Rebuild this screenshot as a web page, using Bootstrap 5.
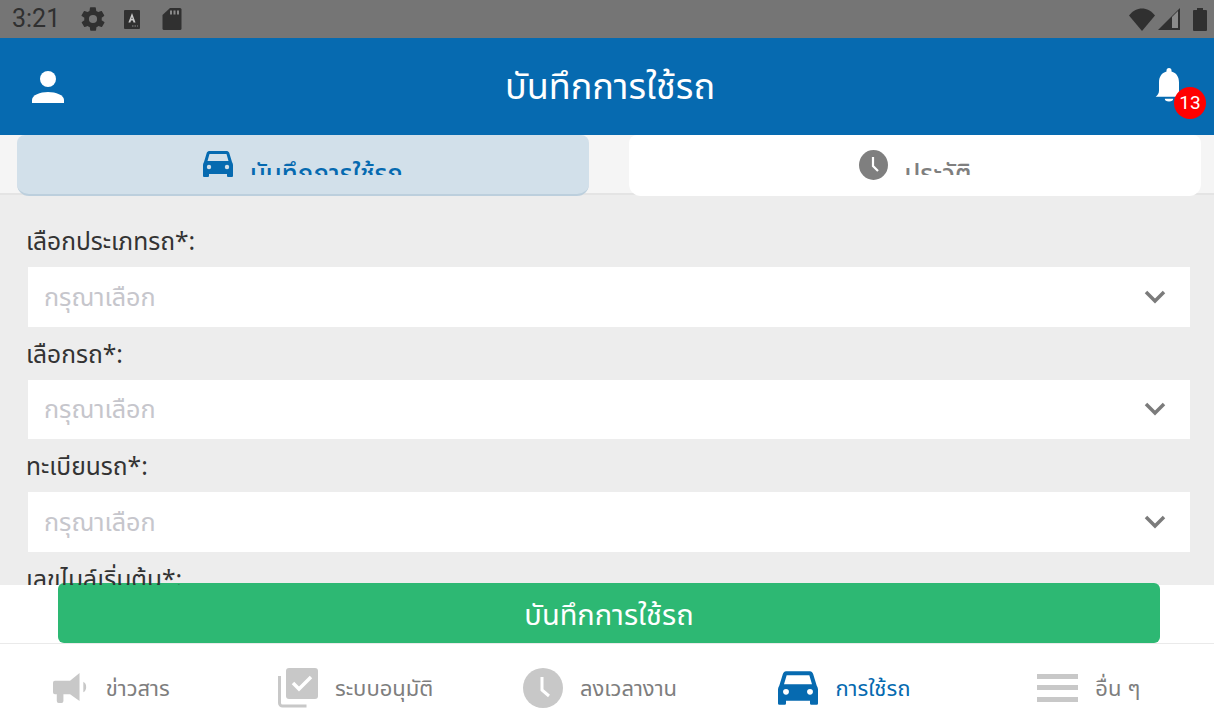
<!DOCTYPE html>
<html lang="th">
<head>
<meta charset="utf-8">
<title>บันทึกการใช้รถ</title>
<link href="https://cdn.jsdelivr.net/npm/bootstrap@5.3.0/dist/css/bootstrap.min.css" rel="stylesheet">
<style>
html,body{height:726px;overflow:hidden}
body{font-family:"Noto Sans","Noto Sans Thai","Open Sans","DejaVu Sans",sans-serif;background:#fff;width:1214px}
.sbar{height:38px;background:#757575;color:#303030;padding:0 7px 0 12px}
.sbar .clock{font-family:Roboto,sans-serif;font-size:25px;line-height:34px;width:47px}
.ic-gear{margin-left:20px}
.ic-font{margin-left:16px}
.ic-sd{margin-left:21px}
.sright{gap:3px}
.ic-batt{margin-left:10px}
.hdr{height:97px;background:#066ab0;color:#fff;padding:0 9px 0 30px}
.hdr-title{font-size:36px;line-height:1;padding-bottom:1px;margin-left:1px}
.bell-wrap{width:52px;height:60px}
.bell-ic{position:absolute;left:1px;top:10px}
.bell-count{position:absolute;left:21px;top:30px;width:32px;height:32px;border-radius:50%;background:#f00;color:#fff;font-family:Roboto,sans-serif;font-size:19px;line-height:32px;text-align:center}
.tabbar{height:60px;background:#f5f5f5;padding:0 13px 0 17px;gap:40px;border-bottom:2px solid #e4e4e4}
.tabitem{flex:1 1 0;height:61px;border-radius:8px 8px 12px 12px;gap:17px;padding-top:15px;overflow:hidden;background:#fff;color:#7f7f7f}
.tabitem.on{background:#d2e0ea;color:#066ab0;border-bottom:2px solid #bccfdd}
.tabtxt{font-size:25.8px;height:25px;line-height:46px;overflow:hidden;font-weight:500}
.content{height:390px;background:#ededed;overflow:hidden;padding:31px 24px 0 28px}
.flabel{color:#333;font-size:24.6px;line-height:30px;margin:0 0 11px -2px;display:block}
.fsel{height:59.5px;background:#fff;padding:0 23px 0 16px;margin-bottom:12px;color:#c6c6cc;font-size:25.2px}
.band{display:flow-root;height:58px;background:#fff;padding:0 54px 0 58px}
.savebtn{display:block;width:100%;height:59.5px;margin-top:-2px;background:#2db873;border:0;border-radius:6px;color:#fff;font-size:29px;line-height:62px;padding:0}
.tabnav{height:83px;background:#fff;border-top:1px solid #eaeaea;margin:0 -4px}
.navit{flex:1 1 0;gap:17px;color:#7e7e7e;font-size:22px;padding:5px 14px 0 0}
.navit.on{color:#066ab0}
</style>
</head>
<body>
<div class="sbar d-flex align-items-center">
  <span class="clock">3:21</span>
  <svg class="ic-gear" width="28" height="28" viewBox="0 0 24 24" fill="#303030"><path d="M19.4 13c0-.3.1-.6.1-1s0-.7-.1-1l2.100-1.600c.2-.2.2-.4.1-.6l-2-3.500c-.1-.2-.4-.3-.6-.2l-2.500 1c-.5-.4-1.100-.7-1.700-1l-.4-2.700c0-.2-.2-.4-.5-.4h-4c-.2 0-.4.2-.5.4l-.4 2.700c-.6.2-1.100.6-1.700 1l-2.500-1c-.2-.1-.5 0-.6.2l-2 3.500c-.1.2-.1.5.1.6L4.600 11c0 .3-.1.7-.1 1s0 .7.1 1l-2.100 1.600c-.2.2-.2.4-.1.6l2 3.500c.1.2.4.3.6.2l2.500-1c.5.4 1.100.7 1.700 1l.4 2.700c0 .2.3.4.5.4h4c.3 0 .5-.2.5-.4l.4-2.700c.6-.2 1.100-.6 1.700-1l2.500 1c.2.1.5 0 .6-.2l2-3.500c.1-.2.1-.5-.1-.6L19.400 13zM12 15.500a3.500 3.500 0 1 1 0-7 3.500 3.500 0 0 1 0 7z"/></svg>
  <svg class="ic-font" width="18" height="21" viewBox="0 0 18 21"><rect x="1" y="1" width="16" height="19" rx="1" fill="#303030"/><path d="M9 4l3.500 9.500h-2l-.6-2H8l-.6 2h-2zM8.400 10h1.200L9 8z" fill="#c8c8c8"/><path d="M9 17h6" stroke="#888" stroke-dasharray="1.500 1"/></svg>
  <svg class="ic-sd" width="20" height="24" viewBox="0 0 20 24"><path d="M8 1h10a1.500 1.500 0 0 1 1.500 1.500v19A1.500 1.500 0 0 1 18 23H2a1.500 1.500 0 0 1-1.500-1.500V8z" fill="#303030"/><path d="M8 3.500h2v4H8zM11.500 3.500h2v4h-2zM15 3.500h2v4h-2z" fill="#8a8a8a"/></svg>
  <span class="sright ms-auto d-flex align-items-center">
    <svg width="26" height="23" viewBox="0 0 26 23"><path d="M0 7.500C7-2 19-2 26 7.500L13 23z" fill="#303030"/></svg>
    <svg width="22" height="22" viewBox="0 0 22 22"><path d="M0 22L22 0v22z" fill="#303030"/><path d="M14 9l6-6v17h-6z" fill="#8a8a8a"/></svg>
    <svg class="ic-batt" width="14" height="23" viewBox="0 0 14 23"><path d="M4 0h6v2h3a1 1 0 0 1 1 1v19a1 1 0 0 1-1 1H1a1 1 0 0 1-1-1V3a1 1 0 0 1 1-1h3z" fill="#303030"/></svg>
  </span>
</div>

<header class="hdr d-flex align-items-center justify-content-between">
  <svg width="36" height="36" viewBox="0 0 36 36" fill="#fff"><circle cx="18" cy="10" r="8"/><path d="M2 34v-3c0-5 8-8 16-8s16 3 16 8v3z"/></svg>
  <div class="hdr-title">บันทึกการใช้รถ</div>
  <div class="bell-wrap position-relative">
    <svg class="bell-ic" width="30" height="38" viewBox="0 0 36 42" preserveAspectRatio="none" fill="#fff"><path d="M18 1a3 3 0 0 1 3 3v1c6 1.500 9 6 9 12v9c0 3 1.500 5 4 7H2c2.500-2 4-4 4-7v-9C6 11 9 6.500 15 5V4a3 3 0 0 1 3-3z"/><path d="M13 35h10a5 3 0 0 1-10 0z"/></svg>
    <span class="bell-count">13</span>
  </div>
</header>

<div class="tabbar d-flex">
  <div class="tabitem on d-flex justify-content-center align-items-start">
    <svg width="30" height="28" viewBox="0 0 30 28" fill="#066ab0"><path d="M6 1h18c1 0 2 1 2.300 2L29 12c.6 1 1 2 1 3v11a1 1 0 0 1-1 1h-4a1 1 0 0 1-1-1v-2H6v2a1 1 0 0 1-1 1H1a1 1 0 0 1-1-1V15c0-1 .4-2 1-3L3.700 3C4 2 5 1 6 1zm.5 3L4.500 11h21l-2-7z" fill-rule="evenodd"/><circle cx="6" cy="17" r="2.200" fill="#d2e0ea"/><circle cx="24" cy="17" r="2.200" fill="#d2e0ea"/></svg>
    <div class="tabtxt">บันทึกการใช้รถ</div>
  </div>
  <div class="tabitem d-flex justify-content-center align-items-start">
    <svg width="29" height="30" viewBox="0 0 29 30"><ellipse cx="14.500" cy="15" rx="14.500" ry="15" fill="#7f7f7f"/><path d="M14 7v9l5 5" fill="none" stroke="#fff" stroke-width="2.200"/></svg>
    <div class="tabtxt">ประวัติ</div>
  </div>
</div>

<main class="content">
  <label class="flabel">เลือกประเภทรถ*:</label>
  <div class="fsel d-flex align-items-center justify-content-between"><span>กรุณาเลือก</span>
    <svg width="24" height="16" viewBox="0 0 24 16"><path d="M3 3l9 9 9-9" fill="none" stroke="#7b7b7b" stroke-width="3.500"/></svg></div>
  <label class="flabel">เลือกรถ*:</label>
  <div class="fsel d-flex align-items-center justify-content-between"><span>กรุณาเลือก</span>
    <svg width="24" height="16" viewBox="0 0 24 16"><path d="M3 3l9 9 9-9" fill="none" stroke="#7b7b7b" stroke-width="3.500"/></svg></div>
  <label class="flabel">ทะเบียนรถ*:</label>
  <div class="fsel d-flex align-items-center justify-content-between"><span>กรุณาเลือก</span>
    <svg width="24" height="16" viewBox="0 0 24 16"><path d="M3 3l9 9 9-9" fill="none" stroke="#7b7b7b" stroke-width="3.500"/></svg></div>
  <label class="flabel">เลขไมล์เริ่มต้น*:</label>
</main>

<div class="band"><button class="savebtn btn" type="button">บันทึกการใช้รถ</button></div>

<nav class="tabnav d-flex align-items-center">
  <a class="navit d-flex align-items-center justify-content-center text-decoration-none">
    <svg width="36" height="31" viewBox="0 0 38 32" preserveAspectRatio="none" fill="#c8c8c8"><path d="M2 9h16L28 1v29L18 23H11v7a2 2 0 0 1-2 2H6a2 2 0 0 1-2-2v-7H2a2 2 0 0 1-2-2V11a2 2 0 0 1 2-2z"/><path d="M32 10c2 1 3 3 3 5.500s-1 4.500-3 5.500z"/></svg>
    <span>ข่าวสาร</span></a>
  <a class="navit d-flex align-items-center justify-content-center text-decoration-none">
    <svg width="40" height="40" viewBox="0 0 40 40"><path d="M1.500 8v27a3 3 0 0 0 3 3h24" fill="none" stroke="#c8c8c8" stroke-width="3"/><rect x="8" y="0" width="32" height="31" rx="3" fill="#c8c8c8"/><path d="M15 15l6 6 12-12" fill="none" stroke="#fff" stroke-width="3.500"/></svg>
    <span>ระบบอนุมัติ</span></a>
  <a class="navit d-flex align-items-center justify-content-center text-decoration-none">
    <svg width="40" height="40" viewBox="0 0 40 40"><ellipse cx="20" cy="20" rx="20" ry="20" fill="#c8c8c8"/><path d="M19 9v13l7 6" fill="none" stroke="#fff" stroke-width="3"/></svg>
    <span>ลงเวลางาน</span></a>
  <a class="navit on d-flex align-items-center justify-content-center text-decoration-none">
    <svg width="40" height="36" viewBox="0 0 30 28" preserveAspectRatio="none" fill="#066ab0"><path d="M6 1h18c1 0 2 1 2.300 2L29 12c.6 1 1 2 1 3v11a1 1 0 0 1-1 1h-4a1 1 0 0 1-1-1v-2H6v2a1 1 0 0 1-1 1H1a1 1 0 0 1-1-1V15c0-1 .4-2 1-3L3.700 3C4 2 5 1 6 1zm.5 3L4.500 11h21l-2-7z" fill-rule="evenodd"/><circle cx="6" cy="17" r="2.200" fill="#fff"/><circle cx="24" cy="17" r="2.200" fill="#fff"/></svg>
    <span>การใช้รถ</span></a>
  <a class="navit d-flex align-items-center justify-content-center text-decoration-none">
    <svg width="41" height="28" viewBox="0 0 41 28" fill="#c8c8c8"><rect width="41" height="5"/><rect y="11" width="41" height="5"/><rect y="23" width="41" height="5"/></svg>
    <span>อื่น ๆ</span></a>
</nav>
<script src="https://cdn.jsdelivr.net/npm/bootstrap@5.3.0/dist/js/bootstrap.bundle.min.js"></script>
</body>
</html>
